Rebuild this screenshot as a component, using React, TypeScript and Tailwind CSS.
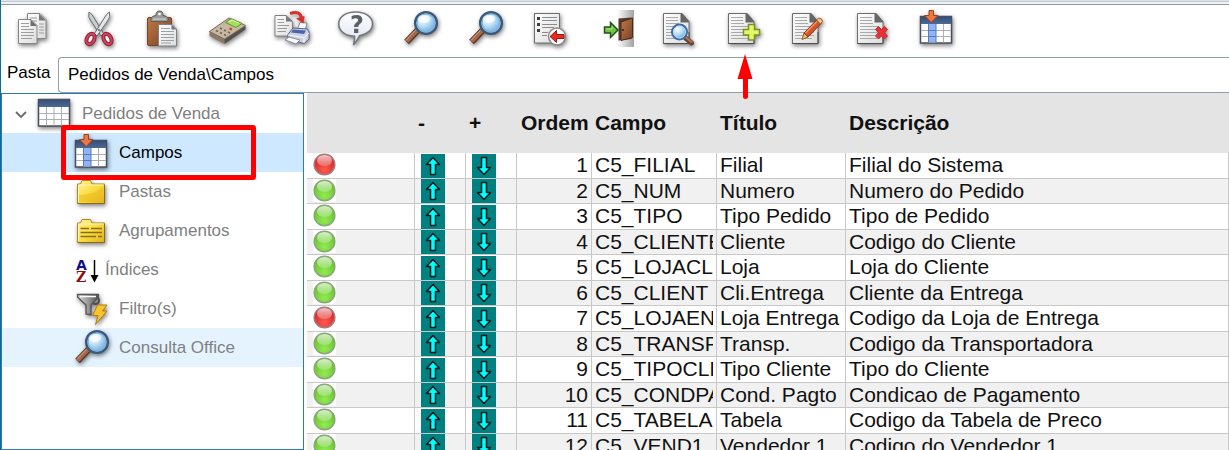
import React from 'react';

interface Campo {
    ordem: number;
    campo: string;
    titulo: string;
    descricao: string;
    bloqueado?: boolean;
}

interface Item {
    nome: string;
    icono: React.ReactNode;
    className?: string;
}

const campos: Campo[] = [
    { ordem: 1, campo: 'C5_FILIAL', titulo: 'Filial', descricao: 'Filial do Sistema', bloqueado: true },
    { ordem: 2, campo: 'C5_NUM', titulo: 'Numero', descricao: 'Numero do Pedido' },
    { ordem: 3, campo: 'C5_TIPO', titulo: 'Tipo Pedido', descricao: 'Tipo de Pedido' },
    { ordem: 4, campo: 'C5_CLIENTE', titulo: 'Cliente', descricao: 'Codigo do Cliente' },
    { ordem: 5, campo: 'C5_LOJACLI', titulo: 'Loja', descricao: 'Loja do Cliente' },
    { ordem: 6, campo: 'C5_CLIENT', titulo: 'Cli.Entrega', descricao: 'Cliente da Entrega' },
    { ordem: 7, campo: 'C5_LOJAENT', titulo: 'Loja Entrega', descricao: 'Codigo da Loja de Entrega', bloqueado: true },
    { ordem: 8, campo: 'C5_TRANSP', titulo: 'Transp.', descricao: 'Codigo da Transportadora' },
    { ordem: 9, campo: 'C5_TIPOCLI', titulo: 'Tipo Cliente', descricao: 'Tipo do Cliente' },
    { ordem: 10, campo: 'C5_CONDPAG', titulo: 'Cond. Pagto', descricao: 'Condicao de Pagamento' },
    { ordem: 11, campo: 'C5_TABELA', titulo: 'Tabela', descricao: 'Codigo da Tabela de Preco' },
    { ordem: 12, campo: 'C5_VEND1', titulo: 'Vendedor 1', descricao: 'Codigo do Vendedor 1' },
];

function Defs() {
    return (
        <svg className="absolute size-0" aria-hidden="true">
            <defs>
                <linearGradient id="papel" x1="0" y1="0" x2="1" y2="1">
                    <stop offset="0" stopColor="#ffffff" />
                    <stop offset="1" stopColor="#dcdcdc" />
                </linearGradient>
                <radialGradient id="lente" cx="0.35" cy="0.3" r="0.75">
                    <stop offset="0" stopColor="#ffffff" />
                    <stop offset="0.4" stopColor="#c3e4f8" />
                    <stop offset="1" stopColor="#5f9fd6" />
                </radialGradient>
                <linearGradient id="madeira" x1="0" y1="0" x2="1" y2="1">
                    <stop offset="0" stopColor="#c07a45" />
                    <stop offset="1" stopColor="#7a3f28" />
                </linearGradient>
                <linearGradient id="folder" x1="0" y1="0" x2="1" y2="1">
                    <stop offset="0" stopColor="#fff3a0" />
                    <stop offset="0.5" stopColor="#fbdc3e" />
                    <stop offset="1" stopColor="#e0ae1c" />
                </linearGradient>
                <linearGradient id="azul" x1="0" y1="0" x2="0" y2="1">
                    <stop offset="0" stopColor="#34507c" />
                    <stop offset="1" stopColor="#4d6a92" />
                </linearGradient>
                <linearGradient id="metal" x1="0" y1="0" x2="1" y2="0">
                    <stop offset="0" stopColor="#dddddd" />
                    <stop offset="0.5" stopColor="#9a9a9a" />
                    <stop offset="1" stopColor="#4c4c4c" />
                </linearGradient>
                <linearGradient id="sombra" x1="0" y1="0" x2="1" y2="0">
                    <stop offset="0" stopColor="#ffffff" />
                    <stop offset="1" stopColor="#a2a2a2" />
                </linearGradient>
                <linearGradient id="balao" x1="0" y1="0" x2="0" y2="1">
                    <stop offset="0" stopColor="#ffffff" />
                    <stop offset="1" stopColor="#dde3ee" />
                </linearGradient>
                <radialGradient id="verde" cx="0.5" cy="0.75" r="0.7">
                    <stop offset="0" stopColor="#93ea55" />
                    <stop offset="1" stopColor="#62c228" />
                </radialGradient>
                <radialGradient id="vermelho" cx="0.5" cy="0.75" r="0.7">
                    <stop offset="0" stopColor="#ff5a50" />
                    <stop offset="1" stopColor="#cf2222" />
                </radialGradient>
                <linearGradient id="brilho" x1="0" y1="0" x2="0" y2="1">
                    <stop offset="0" stopColor="#ffffff" stopOpacity="0.75" />
                    <stop offset="1" stopColor="#ffffff" stopOpacity="0.2" />
                </linearGradient>
            </defs>
        </svg>
    );
}

function Icone({ children, flat }: { children: React.ReactNode; flat?: boolean }) {
    return (
        <svg
            viewBox="0 0 38 38"
            aria-hidden="true"
            className={
                flat
                    ? 'size-[38px] shrink-0'
                    : 'size-[38px] shrink-0 drop-shadow-[1px_2px_2px_rgba(0,0,0,0.5)]'
            }
        >
            {children}
        </svg>
    );
}

// folha com o canto dobrado, base de quase todos os botoes
function Folha() {
    return (
        <>
            <path d="M3.5 3.5H22L29 11.5V33.5H3.5Z" fill="url(#papel)" stroke="#6e6e6e" />
            <path d="M20.5 3.5H22.5L29 11.5V12.5H20.5Z" fill="#666" />
            <path
                d="M6 7.5H18M6 10.5H18M6 13.5H19M6 16.5H25M6 19.5H25M6 22.5H25M6 25.5H25M6 28.5H23"
                stroke="#a9a9a9"
            />
            <path d="M3.5 33.5H29V22" fill="none" stroke="#4d4d4d" />
        </>
    );
}

function Copiar() {
    return (
        <Icone>
            <path d="M12.5 3.5H25L31 9.5V28.5H12.5Z" fill="url(#papel)" stroke="#858585" />
            <path d="M24 3.5L31 10.5H24Z" fill="#777" />
            <path d="M15 8H22M15 11H22M24 14H29M24 17H29M24 20H29M24 23H29" stroke="#999" />
            <path d="M3.5 9.5H16L22 15.5V33.5H3.5Z" fill="url(#papel)" stroke="#858585" />
            <path d="M15.5 9.5L22 16H15.5Z" fill="#707070" />
            <path d="M6 13.5H14M6 16.5H14M6 19.5H19M6 22.5H19M6 25.5H19M6 28.5H17" stroke="#9d9d9d" />
        </Icone>
    );
}

function Recortar() {
    return (
        <Icone>
            <path d="M9 2Q7.500 7 11 11L21 26L23.500 23.500L12 4.500Z" fill="#c9ced1" stroke="#676c70" />
            <path d="M29.500 2Q31 7 27.500 11L17 26L14.500 23.500L26.500 4.500Z" fill="#e4e7e8" stroke="#676c70" />
            <ellipse cx="10.500" cy="29" rx="3.600" ry="5.500" transform="rotate(28 10.500 29)" fill="#fff" stroke="#8b2338" strokeWidth="4" />
            <ellipse cx="27.500" cy="29" rx="3.600" ry="5.500" transform="rotate(-28 27.500 29)" fill="#fff" stroke="#8b2338" strokeWidth="4" />
            <ellipse cx="10.500" cy="29" rx="3.600" ry="5.500" transform="rotate(28 10.500 29)" fill="none" stroke="#d9405c" strokeWidth="2" />
            <ellipse cx="27.500" cy="29" rx="3.600" ry="5.500" transform="rotate(-28 27.500 29)" fill="none" stroke="#d9405c" strokeWidth="2" />
            <circle cx="19" cy="20" r="1" fill="#555" />
        </Icone>
    );
}

function Colar() {
    return (
        <Icone>
            <rect x="3.500" y="7.500" width="24" height="28" rx="1.500" fill="url(#madeira)" stroke="#74432c" />
            <path d="M7 11.500V8Q8 6 12 5.500Q12 1 15.500 1T19 5.500Q23 6 24 8V11.500Z" fill="#9a9b96" stroke="#5c5d59" />
            <path d="M9 9H22" stroke="#d5d6d1" />
            <circle cx="15.500" cy="4" r="1.300" fill="#fff" />
            <path d="M14.500 14.500H28L32.500 19V36H14.500Z" fill="url(#papel)" stroke="#7d8288" />
            <path d="M27.500 14.500V19.500H32.500Z" fill="#777" />
            <path d="M17 18.500H26M17 21.500H30M17 24.500H30M17 27.500H30M17 30.500H30M17 33H27" stroke="#9aa1a8" />
        </Icone>
    );
}

function Calculadora() {
    return (
        <Icone>
            <path d="M0.500 21.500L15.500 29V34L0.500 26Z" fill="#8b7965" />
            <path d="M15.500 29L36.500 15.500V19.500L15.500 34Z" fill="#57504a" />
            <path d="M0.500 21.500L20 8L36.500 15.500L15.500 29Z" fill="#c6b8a1" stroke="#7b6d5c" />
            <path d="M16.500 12.500L22 8.500L33 13.500L27 17.500Z" fill="#a5e05c" stroke="#5f8f38" />
            <path d="M20 12L23 10L30 13" fill="none" stroke="#dcf8b4" />
            <path d="M7 20.500L9 21.500M11 18L13 19M11 22.500L13 23.500M15 20L17 21M15 24.500L17 25.500M19 22L21 23" stroke="#6f6252" strokeWidth="1.500" />
            <path d="M20.500 18.500L23 19.500" stroke="#d13a22" strokeWidth="2" />
        </Icone>
    );
}

function Imprimir() {
    return (
        <Icone>
            <path d="M2 5.500H13L19.500 11.500V26H2Z" fill="url(#papel)" stroke="#808080" />
            <path d="M13 5.500V11.500H19.500Z" fill="#777" />
            <path d="M4.500 9.500H11M4.500 12.500H11M4.500 15.500H16M4.500 18.500H14M4.500 21.500H13" stroke="#9a9a9a" />
            <path d="M24 20L27 12.500L34 13L32 21Z" fill="#f6f7fb" stroke="#8288a0" />
            <path d="M15 24.500L20 18L34.500 19L36 22V29L31 33.500L15 29Z" fill="#ced3e4" stroke="#596080" />
            <path d="M20 19.500L33 20.500L31 24L18 22.500Z" fill="#4d65a8" />
            <path d="M15 25L31 27.500V33M31 27.500L36 23" fill="none" stroke="#f5f6fb" />
            <path d="M12 30L16 27L27 30L23 34Z" fill="#fafafa" stroke="#858ba0" />
            <path d="M17 3.500Q27 0 28.500 8" fill="none" stroke="#d8302b" strokeWidth="3" />
            <path d="M23 8.500L31.500 6L30.500 13.500Z" fill="#d8302b" />
        </Icone>
    );
}

function Ajuda() {
    return (
        <Icone>
            <path
                d="M17.500 2C27.500 2 34.500 7 34.500 14C34.500 20 29 24.500 21.500 25.800Q19 31 15.500 35Q17 29 16.500 26.200C7 26 0.700 21 0.700 14C0.700 7 7.500 2 17.500 2Z"
                fill="url(#balao)"
                stroke="#75797e"
                strokeWidth="1.600"
            />
            <text x="19" y="23" textAnchor="middle" fill="#5b5f66" className="font-['DejaVu_Sans'] text-[24px] font-bold">
                ?
            </text>
        </Icone>
    );
}

function Lupa() {
    return (
        <Icone>
            <path d="M15.500 20.500L4.500 32" stroke="#5a3428" strokeWidth="6.500" />
            <path d="M15 20.500L4.500 31.500" stroke="#a0674a" strokeWidth="4.500" />
            <path d="M13.500 20.500L4 30.500" stroke="#d3a384" />
            <circle cx="24" cy="13" r="10.800" fill="url(#lente)" stroke="#3c5878" strokeWidth="2.500" />
            <circle cx="24" cy="13" r="9" fill="none" stroke="#7fb4e0" strokeWidth="1.500" />
            <ellipse cx="22" cy="9" rx="6" ry="4" fill="#fff" opacity="0.700" />
        </Icone>
    );
}

function Lista() {
    return (
        <Icone>
            <rect x="3.500" y="3.500" width="25" height="29.500" fill="url(#papel)" stroke="#6d6d6d" />
            <path d="M11 7.500H26M11 10.500H26M11 14.500H26M11 17.500H23M11 22.500H17M11 25.500H16" stroke="#8c8c8c" />
            <path d="M6 8.500H9M6 14.500H9M6 20.500H9" stroke="#3d3d3d" strokeWidth="3" />
            <circle cx="26" cy="26.500" r="8.500" fill="#fff" stroke="#8a8a8a" strokeWidth="1.500" />
            <path d="M19 26.500L25.500 20.500V24.500H33V28.500H25.500V32.500Z" fill="#e92a1e" stroke="#951812" />
        </Icone>
    );
}

function Sair() {
    return (
        <Icone flat>
            <rect x="21" width="17" height="37" fill="url(#sombra)" />
            <path d="M22.500 8.500L35.500 7.500V29L22.500 30.500Z" fill="#57392c" />
            <path d="M25 12L36.500 8V27.500L25 30.500Z" fill="url(#madeira)" stroke="#4b2a1e" />
            <circle cx="27" cy="20" r="1" fill="#2c1710" />
            <path d="M8.500 17H14.500V12.500L22 20L14.500 27.500V23H8.500Z" fill="#6fc341" stroke="#225417" strokeWidth="1.500" />
            <path d="M10.500 19H16V16.500" fill="none" stroke="#b6e69a" />
        </Icone>
    );
}

function Visualizar() {
    return (
        <Icone>
            <Folha />
            <path d="M25.500 28L31.500 33" stroke="#6d4534" strokeWidth="5" strokeLinecap="round" />
            <path d="M26 27.500L31.500 32" stroke="#aa7759" strokeWidth="2" strokeLinecap="round" />
            <circle cx="19.500" cy="22" r="7.500" fill="url(#lente)" stroke="#3d6b9b" strokeWidth="2" />
            <circle cx="19.500" cy="22" r="6" fill="none" stroke="#b9ddf1" />
        </Icone>
    );
}

function Incluir() {
    return (
        <Icone>
            <Folha />
            <path
                d="M23.500 14.500H29.500V19.500H34.500V25H29.500V30H23.500V25H18.500V19.500H23.500Z"
                fill="#e2fb62"
                stroke="#7d8d2f"
                strokeWidth="1.500"
            />
        </Icone>
    );
}

function Editar() {
    return (
        <Icone>
            <Folha />
            <path d="M13 29.500L15 23L19 27Z" fill="#f3bc5f" stroke="#965a27" />
            <path d="M15 23L28.500 9L32.500 13L19 27Z" fill="#d35426" stroke="#83351c" />
            <path d="M16.500 23L28 11.500" stroke="#f29263" strokeWidth="1.500" />
            <path d="M27.500 10L29.500 8Q33.500 8 33.500 11.500L31.500 14Z" fill="#eec393" stroke="#955f38" />
        </Icone>
    );
}

function Excluir() {
    return (
        <Icone>
            <Folha />
            <path
                d="M21.500 19.500L24.500 16.500L27.500 19.500L30.500 16.500L33.500 19.500L30.500 22.700L33.500 26L30.500 29L27.500 26L24.500 29L21.500 26L24.500 22.700Z"
                fill="#e83036"
                stroke="#b02a2c"
            />
        </Icone>
    );
}

function Tabela() {
    return (
        <Icone>
            <rect x="2.500" y="4.500" width="31" height="26.500" fill="#fff" stroke="#4b4f5c" strokeWidth="1.500" />
            <rect x="3" y="5" width="30" height="7" fill="url(#azul)" />
            <path d="M3 18.500H33M3 24.500H33M10.500 12V30.500M18 12V30.500M25.500 12V30.500" stroke="#aaaebb" />
        </Icone>
    );
}

function TabelaColuna() {
    return (
        <Icone>
            <rect x="2.500" y="6.500" width="31" height="26.500" fill="#fff" stroke="#4b4f5c" strokeWidth="1.500" />
            <rect x="3" y="7" width="30" height="7" fill="url(#azul)" />
            <rect x="10.500" y="14" width="7.500" height="18.500" fill="#8fb3f8" />
            <path d="M3 20.500H33M3 26.500H33M25.500 14V32.500" stroke="#aaaebb" />
            <path d="M10.500 14V32.500M18 14V32.500M10.500 20.500H18M10.500 26.500H18" stroke="#5c79b4" />
            <path d="M11 0.500H15.500V5.500H20L13.200 12.500L6.500 5.500H11Z" fill="#ef7541" stroke="#9c4422" />
        </Icone>
    );
}

function Pasta({ linhas }: { linhas?: boolean }) {
    return (
        <Icone>
            <path d="M4.500 30.500V11H7.500L9 7.500H17.500L19 11H31.500V30.500Z" fill="url(#folder)" stroke="#b18a1d" />
            <path d="M5.500 29V12H30.500" fill="none" stroke="#fff6ba" />
            {linhas ? (
                <path d="M7.500 16.500H16M18 16.500H29M7.500 20.500H29M7.500 24.500H23M25 24.500H29" stroke="#8a6b17" strokeWidth="1.500" />
            ) : (
                <path d="M6 29V22Q18 22 30 15V29Z" fill="#e9b91f" opacity="0.550" />
            )}
            <path d="M4.500 30.500H31.500V12" fill="none" stroke="#8c6c14" />
        </Icone>
    );
}

function Indices() {
    return (
        <svg viewBox="0 0 24 38" aria-hidden="true" className="h-[38px] w-6 shrink-0 overflow-visible">
            <text x="3" y="19" fill="#10108c" className="font-['DejaVu_Sans'] text-[14px] font-bold">A</text>
            <text x="3" y="31" fill="#8c1010" className="font-['DejaVu_Serif'] text-[14px] font-bold">Z</text>
            <path d="M21.500 9V26" stroke="#000" strokeWidth="1.500" />
            <path d="M17.500 24H25.500L21.500 31.500Z" fill="#000" />
        </svg>
    );
}

function Filtro() {
    return (
        <Icone>
            <circle cx="22.500" cy="10.500" r="3.500" fill="#8e8e8e" stroke="#4c4c4c" strokeWidth="2" />
            <path d="M4.500 4.500H25.500V7L18 15V25L13 24V15L4.500 7Z" fill="url(#metal)" stroke="#555" strokeWidth="1.300" />
            <path d="M7 6.500H23" stroke="#fff" strokeWidth="1.500" />
            <path d="M24.500 15H34L29.500 21H34L22.500 34.500L25 25.500H19.500Z" fill="#f9c52b" stroke="#b37b17" />
        </Icone>
    );
}

function Led({ bloqueado }: { bloqueado?: boolean }) {
    return (
        <svg viewBox="0 0 23 23" role="img" aria-label={bloqueado ? 'Bloqueado' : 'Liberado'} className="ml-1.5 size-[23px] bg-white">
            <circle cx="11.500" cy="11.500" r="10.300" fill={bloqueado ? 'url(#vermelho)' : 'url(#verde)'} stroke={bloqueado ? '#a77b7b' : '#8aa57b'} strokeWidth="1.500" />
            <ellipse cx="11.500" cy="7.500" rx="7.500" ry="5.500" fill="url(#brilho)" />
        </svg>
    );
}

function Mover({ abaixo, campo }: { abaixo?: boolean; campo: string }) {
    return (
        <button type="button" aria-label={(abaixo ? 'Descer ' : 'Subir ') + campo} className="ml-1.5 block size-6 bg-[#008080]">
            <svg viewBox="0 0 24 24" className={abaixo ? 'size-6 rotate-180' : 'size-6'}>
                <path d="M12 3.500L18.500 10.500H14.500V20.500H9.500V10.500H5.500Z" fill="#00ffff" stroke="#001a1a" strokeWidth="1.500" strokeLinejoin="round" />
            </svg>
        </button>
    );
}

const botoes: Item[] = [
    { nome: 'Copiar', icono: <Copiar /> },
    { nome: 'Recortar', icono: <Recortar /> },
    { nome: 'Colar', icono: <Colar /> },
    { nome: 'Calculadora', icono: <Calculadora /> },
    { nome: 'Imprimir', icono: <Imprimir /> },
    { nome: 'Ajuda', icono: <Ajuda /> },
    { nome: 'Pesquisar', icono: <Lupa /> },
    { nome: 'Localizar', icono: <Lupa /> },
    { nome: 'Lista', icono: <Lista /> },
    { nome: 'Sair', icono: <Sair /> },
    { nome: 'Visualizar', icono: <Visualizar /> },
    { nome: 'Incluir', icono: <Incluir /> },
    { nome: 'Editar', icono: <Editar /> },
    { nome: 'Excluir', icono: <Excluir /> },
    { nome: 'Campos', icono: <TabelaColuna /> },
];

const arvore: Item[] = [
    { nome: 'Campos', icono: <TabelaColuna />, className: 'bg-[#cde8ff] text-black' },
    { nome: 'Pastas', icono: <Pasta /> },
    { nome: 'Agrupamentos', icono: <Pasta linhas /> },
    { nome: 'Índices', icono: <Indices /> },
    { nome: 'Filtro(s)', icono: <Filtro /> },
    { nome: 'Consulta Office', icono: <Lupa />, className: 'bg-[#e5f3ff]' },
];

function BarraDeFerramentas() {
    return (
        <header>
            <div className="h-[5px] border-b border-[#929699] bg-[#eff2f4]">
                <div className="h-0.5 border-b border-[#bccbd3] bg-[#dbe5ea]" />
            </div>
            <div className="flex max-w-[969px] justify-between px-3.5 pt-[5px] pb-[9px]">
                {botoes.map((item) => (
                    <button key={item.nome} type="button" aria-label={item.nome} className="relative">
                        {item.icono}
                        {item.nome === 'Incluir' && (
                            <svg viewBox="0 0 16 46" aria-hidden="true" className="absolute top-11 left-3 z-10 h-[46px] w-4">
                                <path d="M8 0L15.500 25H11V43Q11 45 8.500 45T6 43V25H0.500Z" fill="#ff0000" />
                            </svg>
                        )}
                    </button>
                ))}
            </div>
        </header>
    );
}

function Arvore() {
    return (
        <nav className="w-[303px] shrink-0 border border-[#3277b8] text-[#808080]">
            <button type="button" className="flex h-[39px] w-full items-center gap-2 pl-3">
                <svg viewBox="0 0 14 14" aria-hidden="true" className="size-3.5">
                    <path d="M2 5L7 10L12 5" fill="none" stroke="#6b6b6b" strokeWidth="1.800" />
                </svg>
                <Tabela />
                Pedidos de Venda
            </button>
            <ul>
                {arvore.map((item) => (
                    <li key={item.nome} className="relative">
                        <button type="button" className={`flex h-[39px] w-full items-center gap-2 pl-[71px] ${item.className ?? ''}`}>
                            {item.icono}
                            {item.nome}
                        </button>
                        {item.nome === 'Campos' && (
                            <div className="pointer-events-none absolute -inset-y-2 left-[59px] z-10 w-[195px] rounded-[3px] border-5 border-[#ff0000]" />
                        )}
                    </li>
                ))}
            </ul>
        </nav>
    );
}

function Grade() {
    const celula = 'overflow-hidden border-r border-b border-[#c8c8c8] p-0';
    const texto = 'overflow-hidden px-[3px]';

    return (
        <div className="min-w-0 flex-1 overflow-hidden">
            <table className="w-full table-fixed border-separate border-spacing-0 text-[21px] leading-6 whitespace-nowrap text-[#111]">
                <colgroup>
                    <col className="w-[108px]" />
                    <col className="w-[51px]" />
                    <col className="w-[51px]" />
                    <col className="w-[75px]" />
                    <col className="w-[125px]" />
                    <col className="w-[129px]" />
                    <col />
                </colgroup>
                <thead className="bg-[#e4e4e4]">
                    <tr className="h-[60px] text-left">
                        <th className="p-0" aria-label="Status" />
                        <th className="px-[3px] py-0">-</th>
                        <th className="px-[3px] py-0">+</th>
                        <th className="px-1 py-0 text-right">Ordem</th>
                        <th className="px-[3px] py-0">Campo</th>
                        <th className="px-[3px] py-0">Título</th>
                        <th className="px-[3px] py-0">Descrição</th>
                    </tr>
                </thead>
                <tbody>
                    {campos.map((item) => (
                        <tr key={item.ordem} className="h-[26px] align-top even:h-[25px] even:bg-[#f1f1f1]">
                            <td className={celula}><Led bloqueado={item.bloqueado} /></td>
                            <td className={`${celula} align-bottom`}><Mover campo={item.campo} /></td>
                            <td className={`${celula} align-bottom`}><Mover abaixo campo={item.campo} /></td>
                            <td className={celula}><div className={`${texto} text-right`}>{item.ordem}</div></td>
                            <td className={celula}><div className="mx-[3px] overflow-hidden">{item.campo}</div></td>
                            <td className={celula}><div className={texto}>{item.titulo}</div></td>
                            <td className={celula}><div className={texto}>{item.descricao}</div></td>
                        </tr>
                    ))}
                </tbody>
            </table>
        </div>
    );
}

export default function App() {
    return (
        <main className="flex h-screen flex-col overflow-hidden border-l border-[#0b6f8c] bg-white font-['Liberation_Sans',Arial,sans-serif] text-[17px] leading-6 text-black">
            <Defs />
            <BarraDeFerramentas />
            <div className="flex shrink-0">
                <label htmlFor="pasta" className="w-[57px] shrink-0 pt-1 pl-1.5">
                    Pasta
                </label>
                <input
                    id="pasta"
                    type="text"
                    defaultValue="Pedidos de Venda\Campos"
                    className="h-9 min-w-0 flex-1 rounded-l border-y border-l border-[#929fa4] bg-white px-[9px] outline-none"
                />
            </div>
            <div className="flex min-h-0 flex-1 gap-[3px]">
                <Arvore />
                <Grade />
            </div>
        </main>
    );
}
